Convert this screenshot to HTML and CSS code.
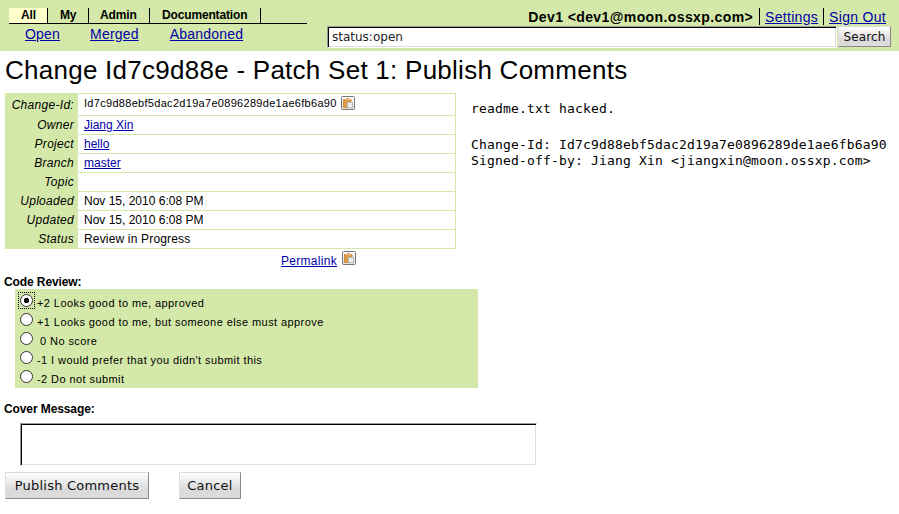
FILE: index.html
```html
<!DOCTYPE html>
<html lang="en">
<head>
<meta charset="utf-8">
<title>Publish Comments</title>
<link rel="stylesheet" href="styles.css">
</head>
<body>
<svg class="defs" width="0" height="0">
  <defs>
    <linearGradient id="face" x1="0" y1="0" x2="0" y2="1"><stop offset="0" stop-color="#fff"/><stop offset="1" stop-color="#ddd"/></linearGradient>
    <symbol id="clip" viewBox="0 0 14 14">
      <rect x=".5" y=".5" width="13" height="13" rx="1" fill="url(#face)" stroke="#777"/>
      <path d="M2.500 3.500h2l1-1h2l1 1h1.500v8h-7.500z" fill="#db9b4b" stroke="#d0903f"/>
      <path d="M4 3.500h5" stroke="#edc48f"/>
      <path d="M6.500 6.500h5v5h-5z" fill="#f3f3f3" stroke="#b5b5b5"/>
      <path d="M8 8.500h2.500" stroke="#ddd"/>
    </symbol>
  </defs>
</svg>
<header class="top">
  <nav class="menu">
    <div class="tabs">
      <span class="tab tab-all">All</span><span class="tab tab-my">My</span><span class="tab tab-admin">Admin</span><span class="tab tab-doc">Documentation</span>
    </div>
    <div class="links"><a href="#">Open</a><a href="#">Merged</a><a href="#">Abandoned</a></div>
  </nav>
  <div class="account">
    <div class="user"><b>Dev1 &lt;dev1@moon.ossxp.com&gt;</b><span class="item"><a href="#">Settings</a></span><span class="item"><a href="#">Sign Out</a></span></div>
    <form class="search"><input type="text" value="status:open"><button type="button">Search</button></form>
  </div>
</header>
<h1><span>Change Id7c9d88e - Patch Set 1: Publish Comments</span></h1>
<main>
  <div class="summary">
    <div class="left">
      <dl class="info">
        <dt class="tall">Change-Id:</dt><dd class="tall hash"><span>Id7c9d88ebf5dac2d19a7e0896289de1ae6fb6a90</span><svg class="clip"><use href="#clip"/></svg></dd>
        <dt>Owner</dt><dd><a href="#">Jiang Xin</a></dd>
        <dt>Project</dt><dd><a href="#">hello</a></dd>
        <dt>Branch</dt><dd><a href="#">master</a></dd>
        <dt>Topic</dt><dd></dd>
        <dt>Uploaded</dt><dd>Nov 15, 2010 6:08 PM</dd>
        <dt>Updated</dt><dd>Nov 15, 2010 6:08 PM</dd>
        <dt>Status</dt><dd class="status">Review in Progress</dd>
      </dl>
      <div class="permalink"><a href="#">Permalink</a><svg class="clip"><use href="#clip"/></svg></div>
    </div>
    <div class="message"><p>readme.txt hacked.</p><p>Change-Id: Id7c9d88ebf5dac2d19a7e0896289de1ae6fb6a90<br>Signed-off-by: Jiang Xin &lt;jiangxin@moon.ossxp.com&gt;</p></div>
  </div>
  <h2>Code Review:</h2>
  <div class="scores">
    <label><input type="radio" name="score" checked><span>+2 Looks good to me, approved</span></label>
    <label><input type="radio" name="score"><span>+1 Looks good to me, but someone else must approve</span></label>
    <label><input type="radio" name="score"><span class="zero">0 No score</span></label>
    <label><input type="radio" name="score"><span>-1 I would prefer that you didn't submit this</span></label>
    <label><input type="radio" name="score"><span>-2 Do not submit</span></label>
  </div>
  <h2 class="cover">Cover Message:</h2>
  <textarea></textarea>
  <div class="actions"><button type="button" class="publish">Publish Comments</button><button type="button" class="cancel">Cancel</button></div>
</main>
</body>
</html>
```
FILE: styles.css
```css
* { box-sizing: border-box; }
body { margin: 0; background: #fff; color: #000; font: 12px/18px "Liberation Sans", Arial, sans-serif; }
a { color: #00a; text-decoration: underline; }
.defs { display: block; }
.clip { display: block; width: 14px; height: 14px; flex: none; }

.top { display: flex; justify-content: space-between; height: 51px; background: #d4e9a9; padding: 8px 8px 0 9px; }
.menu { width: 298px; }
.tabs { display: flex; height: 16px; border-bottom: 1px solid #000; font-weight: bold; line-height: 14px; letter-spacing: -.15px; }
.tab { height: 15px; border-right: 1px solid #000; padding-left: 12px; white-space: nowrap; }
.tab-all { width: 39px; background: #ffc; }
.tab-my { width: 41px; }
.tab-admin { width: 61px; padding-left: 11px; }
.tab-doc { width: 111px; }
.links { display: flex; gap: 30px; padding-left: 16px; font-size: 14px; line-height: 20px; letter-spacing: .2px; }
.links a:last-child { margin-left: 1px; }

.account { width: 564px; }
.user { display: flex; justify-content: flex-end; height: 17px; padding-right: 5px; font-size: 14px; line-height: 18px; white-space: nowrap; }
.user b { letter-spacing: .4px; margin-right: 6px; }
.item { height: 17px; border-left: 1px solid #000; padding-left: 5px; margin-right: 5px; letter-spacing: .3px; }
.item:last-child { margin-right: 0; }
.search { display: flex; gap: 1px; margin: 1px 0 0; }
.search input { width: 510px; height: 22px; margin: 0; padding: 0 3px 1px 4px; border: 1px solid; border-color: #999 #fff #fff #999; box-shadow: inset 1px 1px #000, inset -1px -1px #ddd; outline: 0; font: 12px "DejaVu Sans", sans-serif; color: #222; }
button { padding: 0; border: 1px solid; border-color: #ddd #888 #888 #ddd; border-radius: 0; background: linear-gradient(#fff, #ececec 35%, #d9d9d9 70%, #ddd); color: #111; font: 13px "DejaVu Sans", sans-serif; }
.search button { width: 53px; height: 21px; font-size: 12px; letter-spacing: .1px; }

h1 { height: 42px; margin: 0; padding-left: 5px; font-weight: normal; font-size: 26px; line-height: 39px; letter-spacing: .26px; white-space: nowrap; }
main { padding-left: 5px; }
.summary { display: flex; height: 180px; }
.left { width: 451px; }
.info { display: grid; grid-template-columns: 73px 1fr; margin: 0; border: 1px solid #d4e9a9; border-left: 0; border-bottom: 0; }
.info dt, .info dd { height: 19px; margin: 0; border-bottom: 1px solid #d4e9a9; line-height: 18px; }
.info dt { background: #d4e9a9; text-align: right; padding-right: 4px; font-style: italic; letter-spacing: .3px; }
.info dd { padding-left: 6px; }
.info .tall { height: 22px; line-height: 22px; }
.info .hash { display: flex; gap: 4px; padding-top: 2px; font-size: 11px; line-height: 14px; letter-spacing: .3px; }
.info .status { letter-spacing: .17px; }
.permalink { display: flex; padding: 2px 0 0 276px; gap: 5px; line-height: 20px; letter-spacing: .3px; }
.message { padding: 8px 0 0 15px; font: 13px/16px "DejaVu Sans Mono", monospace; letter-spacing: .17px; white-space: nowrap; }
.message p { margin: 0 0 20px; }

h2 { height: 16px; margin: 0 0 0 -1px; font-size: 12px; line-height: 18px; letter-spacing: -.1px; }
.scores { width: 463px; height: 99px; margin-left: 10px; padding: 2px 0 0 3px; background: #d4e9a9; }
.scores label { display: flex; height: 19px; font-size: 11px; line-height: 24px; letter-spacing: .42px; }
.scores input { appearance: none; position: relative; width: 13px; height: 13px; margin: 3px 4px 0 2px; border: 1px solid #333; border-radius: 50%; background: #fff; flex: none; }
.scores input:checked { background: radial-gradient(circle, #111 2.5px, #fff 3px); }
.scores input:checked::before { content: ""; position: absolute; inset: -3px; border: 1px dotted #000; }
.scores .zero { margin-left: 3px; }
h2.cover { margin-top: 12px; }
textarea { display: block; width: 517px; height: 43px; margin: 7px 0 0 15px; border: 1px solid; border-color: #999 #fff #fff #999; box-shadow: inset 1px 1px #000, inset -1px -1px #ddd; border-radius: 0; resize: none; background: #fff; outline: 0; }
.actions { display: flex; gap: 30px; margin-top: 6px; }
.actions button { height: 27px; padding-bottom: 1px; letter-spacing: .22px; }
.publish { width: 144px; }
.cancel { width: 62px; }
```
